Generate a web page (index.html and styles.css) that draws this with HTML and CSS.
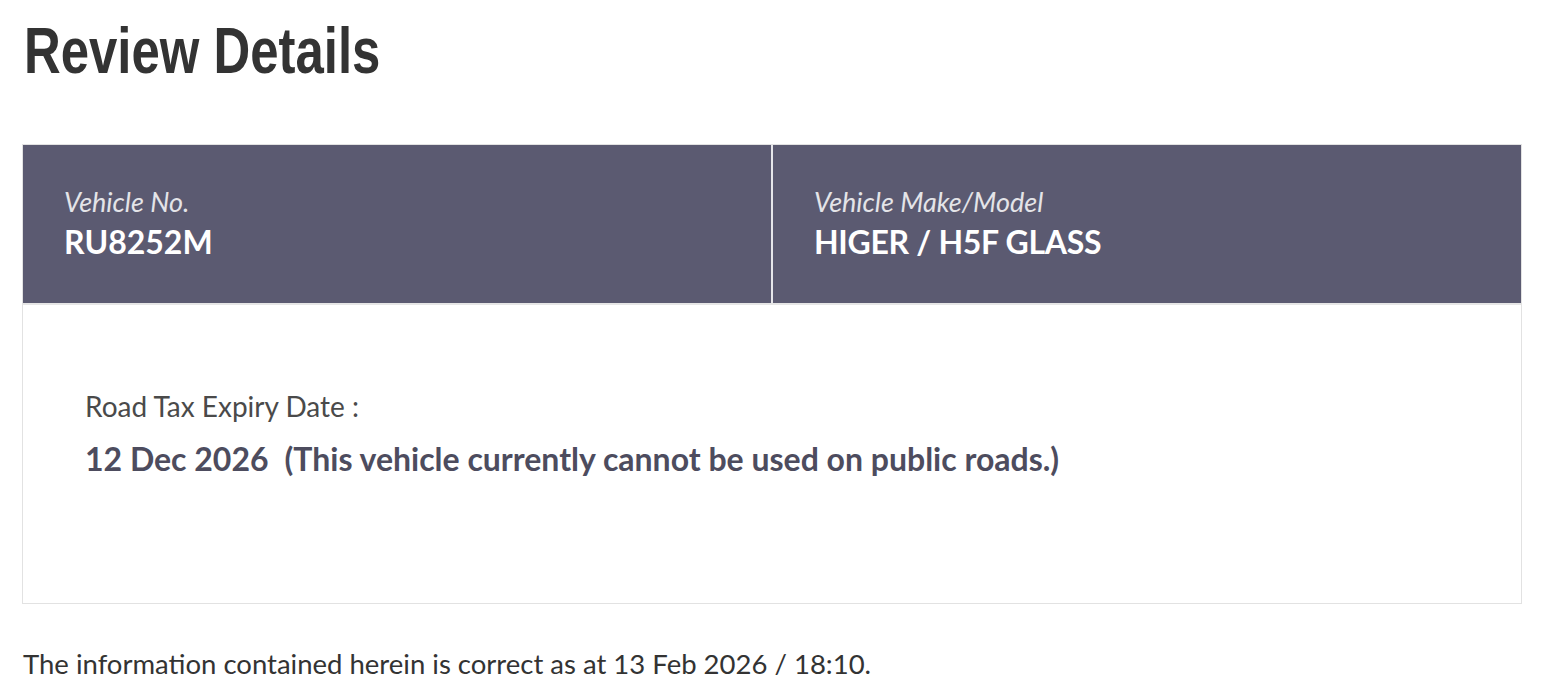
FILE: index.html
```html
<!DOCTYPE html>
<html>
<head>
<meta charset="utf-8">
<link rel="stylesheet" href="styles.css">
</head>
<body>
<div class="page">
  <h1 class="title"><span class="title-text">Review Details</span></h1>
  <div class="card">
    <div class="head">
      <div class="cell">
        <div class="label">Vehicle No.</div>
        <div class="value">RU8252M</div>
      </div>
      <div class="cell">
        <div class="label">Vehicle Make/Model</div>
        <div class="value">HIGER / H5F GLASS</div>
      </div>
    </div>
    <div class="body">
      <div class="body-label">Road Tax Expiry Date :</div>
      <div class="body-value"><span class="date">12 Dec 2026</span>(This vehicle currently cannot be used on public roads.)</div>
    </div>
  </div>
  <p class="note">The information contained herein is correct as at 13 Feb 2026 / 18:10.</p>
</div>
</body>
</html>
```
FILE: styles.css
```css
html, body { margin: 0; padding: 0; background: #fff; }
body { font-family: Lato, "Noto Sans", sans-serif; color: #333; }
.page { padding: 0 26px 0 22px; }
.title {
  font-family: "Liberation Sans", Arial, sans-serif;
  font-weight: 700;
  font-size: 64px;
  line-height: 1;
  color: #333;
  margin: 0;
  padding: 19px 0 0 2px;
  height: 144px;
  box-sizing: border-box;
  white-space: nowrap;
}
.title-text { display: inline-block; transform: scaleX(0.795); transform-origin: left center; }
.card { border: 1px solid #e2e2e2; }
.head { display: flex; background: #5b5a71; height: 158px; }
.cell { flex: 1; padding: 40px 0 0 41px; }
.cell + .cell { border-left: 2px solid #e6e6ea; }
.label { font-style: italic; font-size: 27px; color: #e4e4e8; line-height: 34px; }
.value { font-weight: 700; font-size: 32px; color: #fff; line-height: 45px; }
.value-narrow { letter-spacing: -0.3px; }
.cell + .cell .value { letter-spacing: -0.3px; }
.body { border-top: 2px solid #e6e6e6; height: 300px; box-sizing: border-box; padding: 85px 0 0 62px; }
.body-label { font-size: 28px; color: #4a4a4a; line-height: 32px; }
.body-value { font-weight: 700; font-size: 32px; color: #4d4c5e; line-height: 40px; margin-top: 17px; }
.date { margin-right: 16px; }
.note { font-size: 27.5px; color: #333; margin: 43px 0 0 1px; line-height: 34px; }
```
